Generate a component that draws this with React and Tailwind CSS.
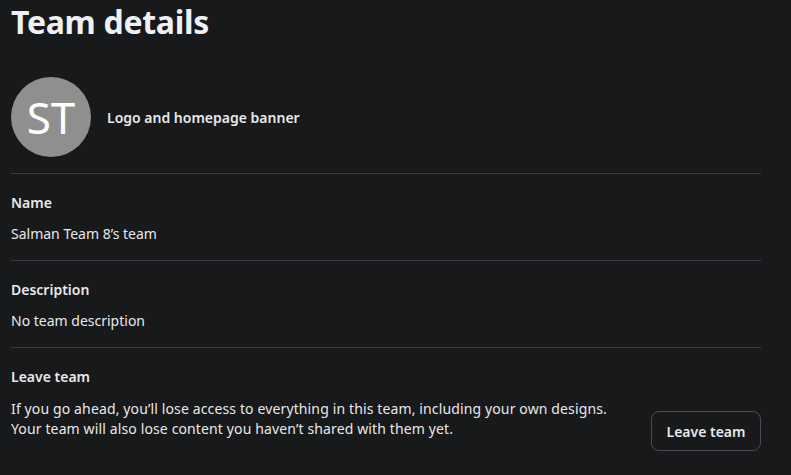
export default function App() {
  const font = { fontFamily: '"Noto Sans", "Open Sans", sans-serif' }
  return (
    <div className="min-h-[475px] w-[791px] overflow-hidden bg-[#18191b] px-[11px] text-[#e8e8ea]" style={font}>
      <div className="w-[750px]">
        <h1 className="text-[32px] font-bold leading-[44px] tracking-[-0.3px] text-[#eef0f3]">Team details</h1>

        <div className="mt-[33px] flex items-center gap-[16px] pb-[16px]">
          <div className="flex h-[80px] w-[80px] items-center justify-center rounded-full bg-[#8f8f8f] text-[44px] leading-none text-white">
            ST
          </div>
          <span className="text-[14px] font-semibold">Logo and homepage banner</span>
        </div>

        <div className="border-t border-[#3a3b3e] pt-[19px] pb-[16px]">
          <div className="text-[14px] font-semibold leading-[20px]">Name</div>
          <div className="mt-[11px] text-[14px] leading-[20px]">Salman Team 8’s team</div>
        </div>

        <div className="border-t border-[#3a3b3e] pt-[19px] pb-[16px]">
          <div className="text-[14px] font-semibold leading-[20px]">Description</div>
          <div className="mt-[11px] text-[14px] leading-[20px]">No team description</div>
        </div>

        <div className="flex items-end justify-between border-t border-[#3a3b3e] pt-[19px]">
          <div>
            <div className="text-[14px] font-semibold leading-[20px]">Leave team</div>
            <p className="mt-[12px] text-[14px] leading-[20px] tracking-[0.13px]">
              If you go ahead, you’ll lose access to everything in this team, including your own designs.
              <br />
              Your team will also lose content you haven’t shared with them yet.
            </p>
          </div>
          <button className="-mb-[12px] h-[40px] w-[110px] rounded-[8px] border border-[#4a4b4f] text-[14px] font-semibold">
            Leave team
          </button>
        </div>
      </div>
    </div>
  )
}
